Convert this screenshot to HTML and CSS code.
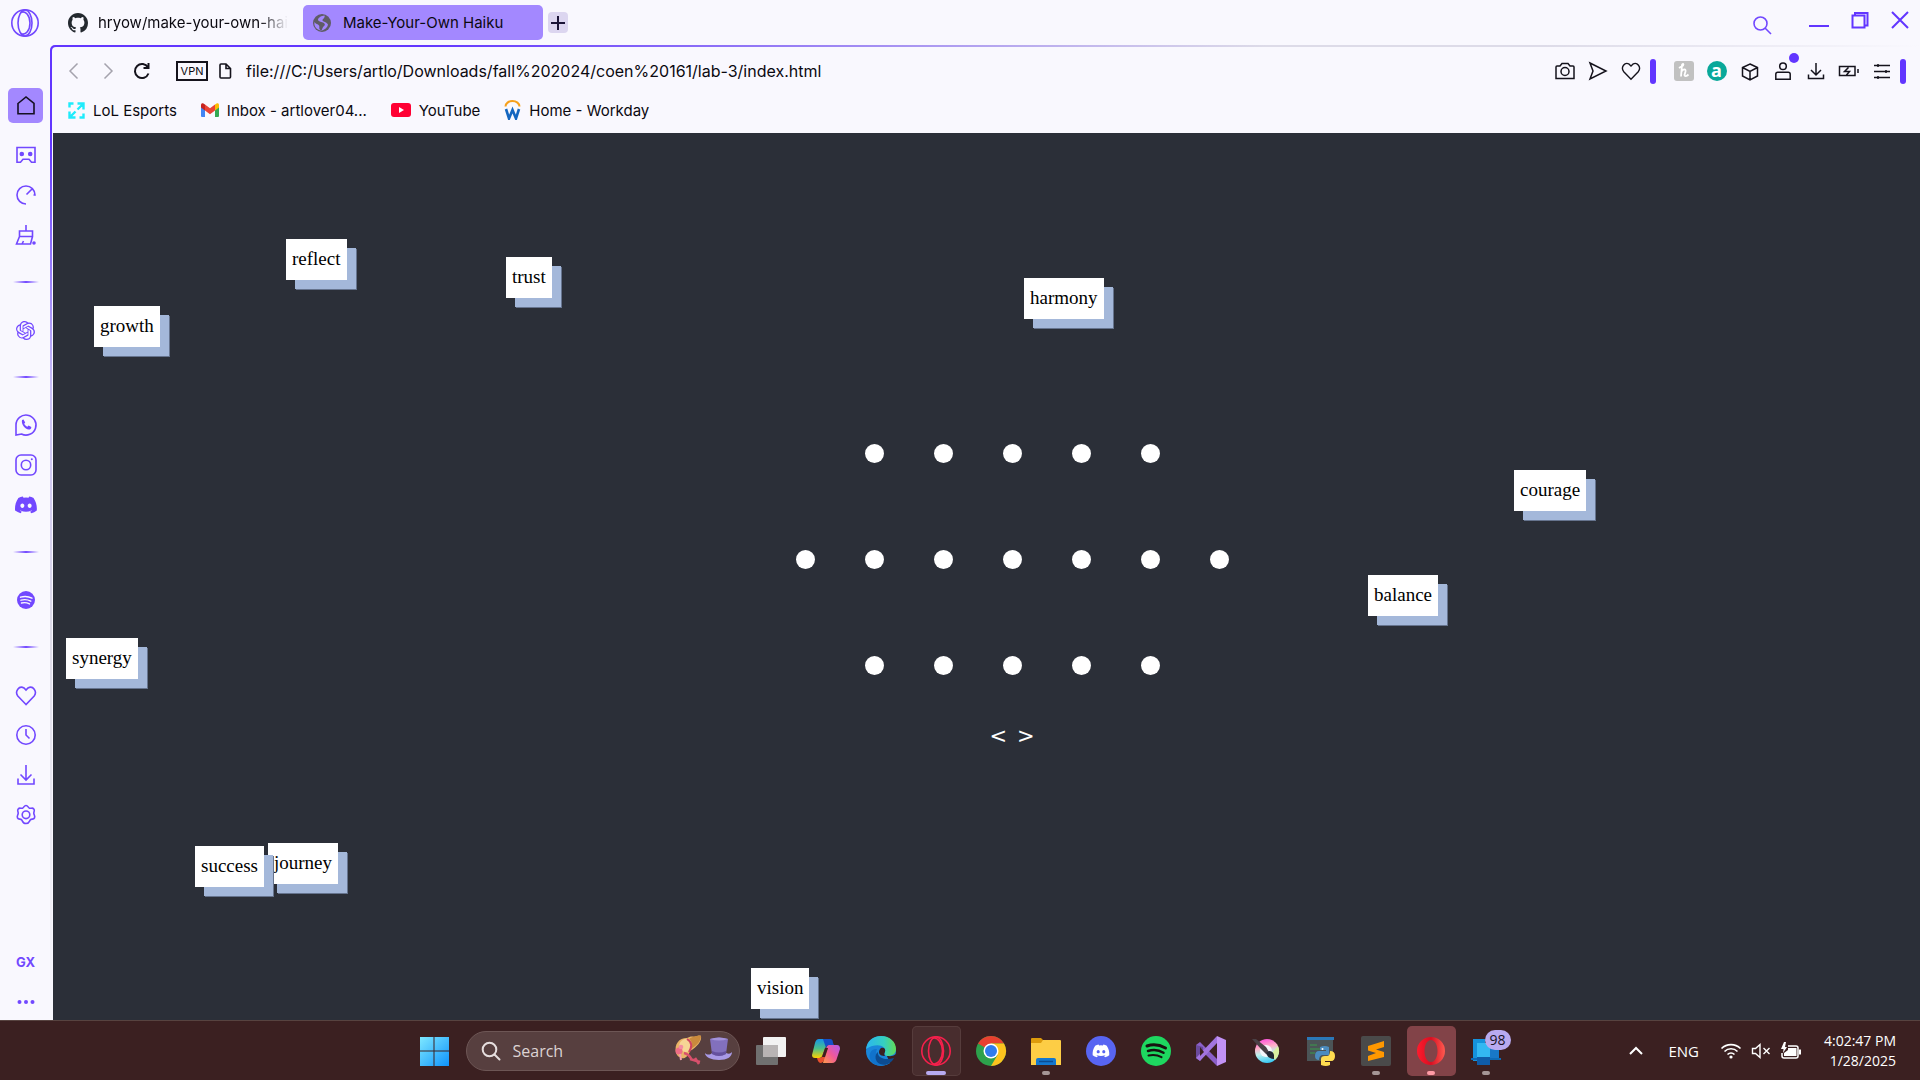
FILE: index.html
```html
<!DOCTYPE html>
<html lang="en">
<head>
<meta charset="utf-8">
<title>Make-Your-Own Haiku</title>
<link rel="stylesheet" href="styles.css">
</head>
<body>
<div class="browser">
  <header class="tabbar">
    <button class="logo" aria-label="Opera menu"><svg width="30" height="30" viewBox="0 0 30 30" class="line"><circle cx="15" cy="15" r="13.2"/><ellipse cx="15" cy="15" rx="7" ry="13"/><path d="M10.500 4.500C16 2 20 8 20 15S16 28 10.500 25.500"/></svg></button>
    <nav class="tabs" aria-label="Tabs">
      <button class="tab"><svg width="20" height="20" viewBox="0 0 16 16" fill="#24292f"><path d="M8 0C3.580 0 0 3.580 0 8c0 3.540 2.290 6.530 5.470 7.590.4.070.55-.17.55-.38 0-.19-.01-.82-.01-1.490-2.010.37-2.530-.49-2.690-.94-.09-.23-.48-.94-.82-1.130-.28-.15-.68-.52-.01-.53.63-.01 1.080.58 1.230.82.72 1.210 1.870.87 2.330.66.07-.52.28-.87.51-1.070-1.780-.2-3.640-.89-3.640-3.950 0-.87.31-1.590.82-2.150-.08-.2-.36-1.020.08-2.120 0 0 .67-.21 2.200.82.64-.18 1.320-.27 2-.27s1.360.09 2 .27c1.530-1.040 2.200-.82 2.200-.82.44 1.100.16 1.920.08 2.120.51.56.82 1.270.82 2.150 0 3.070-1.870 3.750-3.650 3.950.29.25.54.73.54 1.480 0 1.070-.01 1.930-.01 2.200 0 .21.15.46.55.38A8.010 8.010 0 0 0 16 8c0-4.420-3.580-8-8-8z"/></svg><span class="tab-title faded">hryow/make-your-own-hai</span></button>
      <button class="tab active"><svg width="20" height="20" viewBox="0 0 20 20"><circle cx="10" cy="10" r="9" fill="#5f5c66"/><path d="M12.500 2.500c-3 .2-6 2-6.500 4 0 2 3 2 5 3s2.500 2.500 1 3.500-1.500 3-2.500 4.500C6 16.500 8 14 7 12.500S3.500 11 2.500 9c-.5 3 .5 6 4 7.800l3 1c3-1 6-3 6.500-6C15 9 11.500 9 10.500 7.500 10 6 13.500 5 12.500 2.500z" fill="#a286ff"/></svg><span class="tab-title">Make-Your-Own Haiku</span></button>
      <button class="newtab" aria-label="New tab"><svg width="20" height="20" viewBox="0 0 20 20" fill="none" stroke="#1b1437" stroke-width="2"><path d="M10 3v14M3 10h14"/></svg></button>
    </nav>
    <div class="window-controls">
      <button class="search-tabs" aria-label="Search tabs"><svg width="20" height="20" viewBox="0 0 20 20" class="line"><circle cx="8.500" cy="8.500" r="6.500"/><path d="M13 13l6 6"/></svg></button>
      <button aria-label="Minimize"><svg width="22" height="20" viewBox="0 0 22 20" class="line thick"><path d="M1 16h20"/></svg></button>
      <button aria-label="Restore"><svg width="20" height="20" viewBox="0 0 20 20" class="line thick"><path d="M2.500 5.500h12v12h-12zM5 5V3h12.500v12.500H15"/></svg></button>
      <button aria-label="Close"><svg width="20" height="20" viewBox="0 0 20 20" class="line thick"><path d="M2 2l16 16M18 2L2 18"/></svg></button>
    </div>
  </header>
  <div class="workspace">
    <aside class="sidebar">
      <button class="side home" aria-label="Home"><svg width="22" height="22" viewBox="0 0 22 22" fill="none" stroke="#151022" stroke-width="1.600"><path d="M3 8.500L11 2l8 6.500v10.300H3z"/></svg></button>
      <button class="side" aria-label="Gaming"><svg width="22" height="22" viewBox="0 0 22 22" class="line"><path d="M2 3.500h18v14.700h-3.500l-2.500-3H8l-2.500 3H2z"/><circle cx="6.800" cy="10" r="1.500" fill="#7248ff"/><circle cx="15.200" cy="10" r="1.500" fill="#7248ff"/></svg></button>
      <button class="side" aria-label="GX Control"><svg width="22" height="22" viewBox="0 0 22 22" class="line"><path d="M11 20a9 9 0 1 1 9-9h-1.500M11.500 10.500L17 5"/></svg></button>
      <button class="side" aria-label="Cleaner"><svg width="22" height="22" viewBox="0 0 22 22" class="line"><path d="M11 1v6M4.500 7h13v5.500h-13zM4.500 12.500L1.500 20h14l2-7.500M7 20l1.500-3"/><circle cx="19" cy="19" r="1" fill="#7248ff"/></svg></button>
      <hr>
      <button class="side" aria-label="ChatGPT"><svg width="19" height="19" viewBox="0 0 24 24" fill="#7248ff"><path d="M22.2819 9.8211a5.9847 5.9847 0 0 0-.5157-4.9108 6.0462 6.0462 0 0 0-6.5098-2.9A6.0651 6.0651 0 0 0 4.9807 4.1818a5.9847 5.9847 0 0 0-3.9977 2.9 6.0462 6.0462 0 0 0 .7427 7.0966 5.98 5.98 0 0 0 .511 4.9107 6.051 6.051 0 0 0 6.5146 2.9001A5.9847 5.9847 0 0 0 13.2599 24a6.0557 6.0557 0 0 0 5.7718-4.2058 5.9894 5.9894 0 0 0 3.9977-2.9001 6.0557 6.0557 0 0 0-.7475-7.0729zm-9.022 12.6081a4.4755 4.4755 0 0 1-2.8764-1.0408l.1419-.0804 4.7783-2.7582a.7948.7948 0 0 0 .3927-.6813v-6.7369l2.02 1.1686a.071.071 0 0 1 .038.052v5.5826a4.504 4.504 0 0 1-4.4945 4.4944zm-9.6607-4.1254a4.4708 4.4708 0 0 1-.5346-3.0137l.142.0852 4.783 2.7582a.7712.7712 0 0 0 .7806 0l5.8428-3.3685v2.3324a.0804.0804 0 0 1-.0332.0615L9.74 19.9502a4.4992 4.4992 0 0 1-6.1408-1.6464zM2.3408 7.8956a4.485 4.485 0 0 1 2.3655-1.9728V11.6a.7664.7664 0 0 0 .3879.6765l5.8144 3.3543-2.0201 1.1685a.0757.0757 0 0 1-.071 0l-4.8303-2.7865A4.504 4.504 0 0 1 2.3408 7.872zm16.5963 3.8558L13.1038 8.364 15.1192 7.2a.0757.0757 0 0 1 .071 0l4.8303 2.7913a4.4944 4.4944 0 0 1-.6765 8.1042v-5.6772a.79.79 0 0 0-.407-.667zm2.0107-3.0231l-.142-.0852-4.7735-2.7818a.7759.7759 0 0 0-.7854 0L9.409 9.2297V6.8974a.0662.0662 0 0 1 .0284-.0615l4.8303-2.7866a4.4992 4.4992 0 0 1 6.6802 4.66zM8.3065 12.863l-2.02-1.1638a.0804.0804 0 0 1-.038-.0567V6.0742a4.4992 4.4992 0 0 1 7.3757-3.4537l-.142.0805L8.704 5.459a.7948.7948 0 0 0-.3927.6813zm1.0976-2.3654l2.602-1.4998 2.6069 1.4998v2.9994l-2.5974 1.4997-2.6067-1.4997Z"/></svg></button>
      <hr>
      <button class="side" aria-label="WhatsApp"><svg width="24" height="24" viewBox="0 0 24 24" class="line"><path d="M2 22V12a10 10 0 1 1 5.500 9z"/><path d="M8 7l1.500-.5 1.700 3-1 1.300c.7 1.400 1.700 2.400 3.200 3l1.200-1.300 2.700 1.500c.2 2-1.300 2.500-2.500 2.500C11 16 7 11.500 8 7z" fill="#7248ff" stroke="none"/></svg></button>
      <button class="side" aria-label="Instagram"><svg width="24" height="24" viewBox="0 0 24 24" class="line"><rect x="2" y="2" width="20" height="20" rx="5"/><circle cx="12" cy="12" r="4.700"/><circle cx="17.800" cy="6.300" r="1" fill="#7248ff" stroke="none"/></svg></button>
      <button class="side" aria-label="Discord"><svg width="22" height="22" viewBox="0 0 24 24" fill="#7248ff"><path id="discord" d="M20.317 4.370a19.800 19.800 0 0 0-4.885-1.515c-.3.500-.5.900-.7 1.300a18.300 18.300 0 0 0-5.480 0 12 12 0 0 0-.7-1.300A19.700 19.700 0 0 0 3.677 4.370C.533 9.046-.32 13.580.1 18.058a19.900 19.900 0 0 0 6 3.030c.5-.6.900-1.300 1.300-2a13 13 0 0 1-1.900-.9l.4-.3a14.200 14.200 0 0 0 12.100 0l.4.300c-.6.400-1.200.650-1.900.9.400.7.800 1.400 1.250 2a19.800 19.800 0 0 0 6-3.030c.5-5.180-.84-9.670-3.550-13.690zM8.020 15.330c-1.180 0-2.160-1.080-2.160-2.420s.96-2.420 2.160-2.420 2.180 1.100 2.160 2.420c0 1.340-.96 2.420-2.160 2.420zm7.970 0c-1.180 0-2.150-1.080-2.150-2.420s.95-2.420 2.150-2.420 2.180 1.100 2.160 2.420c0 1.340-.94 2.420-2.160 2.420z"/></svg></button>
      <hr>
      <button class="side" aria-label="Spotify"><svg width="20" height="20" viewBox="0 0 20 20" fill="none" stroke="#f9f8fe" stroke-width="1.400" stroke-linecap="round"><circle cx="10" cy="10" r="9" fill="#7248ff" stroke="none"/><path d="M4.500 7.200c4-1.200 8-.8 11.500 1M5 10.200c3.500-1 6.800-.6 9.800 1M5.500 13c3-.7 5.500-.4 8 .9"/></svg></button>
      <hr>
      <button class="side" aria-label="Bookmarks"><svg width="22" height="22" viewBox="0 0 22 22" class="line"><path d="M11 20.500L2.800 12C-.5 7.500 4 1 9 4l2 2 2-2c5-3 9.500 3.500 6.200 8z"/></svg></button>
      <button class="side" aria-label="History"><svg width="22" height="22" viewBox="0 0 22 22" class="line"><circle cx="11" cy="11" r="9.200"/><path d="M11 5v6l3.500 3.500"/></svg></button>
      <button class="side" aria-label="Downloads"><svg width="22" height="22" viewBox="0 0 22 22" class="line"><path d="M11 1v15M5.500 10.500L11 16l5.500-5.500M3 14.500v5.500h16v-5.500"/></svg></button>
      <button class="side" aria-label="Settings"><svg width="22" height="22" viewBox="0 0 22 22" class="line"><path d="M11 1.500c2 0 2 2.200 3.500 2.700s3-.9 4.300.7 0 2.600 0 4.300 1.600 2.600.7 4.600-2.700.8-4 1.900-.8 3.800-4.500 3.800-3.200-2.700-4.500-3.800-3.100.1-4-1.900.7-2.900.7-4.600-1.300-2.700 0-4.300 2.800-.2 4.300-.7S9 1.500 11 1.500z"/><circle cx="11" cy="10.800" r="3.800"/></svg></button>
      <div class="side-bottom">
        <button class="side gx">GX</button>
        <button class="side" aria-label="More"><svg width="22" height="10" viewBox="0 0 22 10" fill="#7248ff"><circle cx="4.500" cy="5" r="2"/><circle cx="11" cy="5" r="2"/><circle cx="17.500" cy="5" r="2"/></svg></button>
      </div>
    </aside>
    <div class="frame">
      <div class="pane">
        <div class="toolbar">
          <button class="tool dim" aria-label="Back"><svg width="20" height="20" viewBox="0 0 20 20"><path d="M13.500 2.500L6 10l7.500 7.500"/></svg></button>
          <button class="tool dim" aria-label="Forward"><svg width="20" height="20" viewBox="0 0 20 20"><path d="M6.500 2.500L14 10l-7.500 7.500"/></svg></button>
          <button class="tool" aria-label="Reload"><svg width="20" height="20" viewBox="0 0 20 20" class="bold"><path d="M16.500 12.500A7 7 0 1 1 16 6.500M16.500 2v5h-5"/></svg></button>
          <button class="vpn">VPN</button>
          <svg class="file" width="14" height="18" viewBox="0 0 14 18" fill="none" stroke="#15131c" stroke-width="1.600"><path d="M3 2h5l4.500 4.500V15q0 1-1 1H3q-1 0-1-1V3q0-1 1-1zM8 2v4.500h4.500"/></svg>
          <input class="address" type="text" aria-label="Address" value="file:///C:/Users/artlo/Downloads/fall%202024/coen%20161/lab-3/index.html">
          <div class="tools">
            <button class="tool" aria-label="Snapshot"><svg width="22" height="20" viewBox="0 0 22 20"><path d="M2 17.500V6q0-1 1-1h3l2-2.500h6L16 5h3q1 0 1 1v11.500z"/><circle cx="11" cy="10.500" r="4"/></svg></button>
            <button class="tool" aria-label="My Flow"><svg width="20" height="20" viewBox="0 0 20 20"><path d="M2 2l16 8-16 8 3-8z"/></svg></button>
            <button class="tool" aria-label="Add to bookmarks"><svg width="20" height="20" viewBox="0 0 22 22"><path d="M11 20L2.800 11.500C-.5 7 4 .5 9 3.500l2 2 2-2c5-3 9.500 3.500 6.200 8z"/></svg></button>
            <i class="grip"></i>
            <button class="tool" aria-label="Honey"><svg width="20" height="20" viewBox="0 0 20 20"><rect width="20" height="20" rx="3" fill="#c1c1c1" stroke="none"/><path stroke="#fff" stroke-width="1.800" d="M5 7l4-2.500c1-1.500 0-2.500-1-.5L7 15.500M7.500 10.500c2-3 4.500-2.500 4 0l-1 3.500c0 1.500 2 1.500 4-.5"/></svg></button>
            <button class="tool amazon" aria-label="Amazon Assistant"><span>a</span></button>
            <button class="tool" aria-label="Extensions"><svg width="20" height="20" viewBox="0 0 20 20"><path d="M10 3l7.500 3.500v8.500L10 19l-7.500-4V6.500zM2.500 6.500L10 10.500l7.500-4M10 10.500V19"/></svg></button>
            <button class="tool profile" aria-label="Profile"><svg width="20" height="20" viewBox="0 0 20 20"><circle cx="10" cy="5.200" r="3.300"/><path d="M2.800 18.200v-5q0-2 2-2h10.400q2 0 2 2v5z"/></svg><i class="notice"></i></button>
            <button class="tool" aria-label="Downloads"><svg width="20" height="20" viewBox="0 0 20 20"><path d="M10 2v11.500M5 9l5 5 5-5M2.500 13.500v4h15v-4"/></svg></button>
            <button class="tool" aria-label="Battery saver"><svg width="22" height="20" viewBox="0 0 22 20"><path d="M1.500 5.500h15.500v9H1.500zM20 8v4M10.500 6.500l-4 4h5l-3 3.500"/></svg></button>
            <button class="tool" aria-label="Easy setup"><svg width="20" height="20" viewBox="0 0 20 20"><path d="M2 4.500h16M2 10.500h16M2 16.500h16M6 3v3M14 9v3M6 15v3"/></svg></button>
            <i class="grip"></i>
          </div>
        </div>
        <nav class="bookmarks" aria-label="Bookmarks bar">
          <a href="#"><svg width="17" height="17" viewBox="0 0 17 17" fill="none" stroke="#1febfb" stroke-width="2.400"><path d="M1.500 5.500v-4h4M9.500 1.500h6v6M15.500 11.500v4h-4M7.500 15.500h-6v-6M15 2L9.500 7.500M2 15l5.500-5.500"/></svg>LoL Esports</a>
          <a href="#"><svg width="18" height="14" viewBox="0 0 18 14"><path d="M0 2v11q0 1 1 1h3V5z" fill="#4285f4"/><path d="M18 2v11q0 1-1 1h-3V5z" fill="#34a853"/><path d="M14 1.500L16 .3q2-.6 2 1.700v2.500l-4 3z" fill="#fbbc04"/><path d="M4 1.500L9 5.300l5-3.800v6L9 11.200 4 7.500z" fill="#ea4335"/><path d="M4 1.500L2 .3Q0-.3 0 2v2.500l4 3z" fill="#c5221f"/></svg>Inbox - artlover04...</a>
          <a href="#"><svg width="20" height="14" viewBox="0 0 20 14"><rect width="20" height="14" rx="3" fill="#f03"/><path d="M8 4l5 3-5 3z" fill="#fff"/></svg>YouTube</a>
          <a href="#"><svg width="17" height="20" viewBox="0 0 17 20" fill="none"><path d="M1.500 6.500a7 5.500 0 0 1 14 0" stroke="#f6a01c" stroke-width="2"/><path d="M2 9l3 9.500L8.500 10l3.500 8.500L15 9" stroke="#1466c0" stroke-width="2.600"/></svg>Home - Workday</a>
        </nav>
        <main class="page">
          <div class="haiku">
            <div class="row"><i></i><i></i><i></i><i></i><i></i></div>
            <div class="row"><i></i><i></i><i></i><i></i><i></i><i></i><i></i></div>
            <div class="row"><i></i><i></i><i></i><i></i><i></i></div>
            <div class="arrows"><button>&lt;</button><button>&gt;</button></div>
          </div>
          <div class="word reflect">reflect</div>
          <div class="word trust">trust</div>
          <div class="word growth">growth</div>
          <div class="word harmony">harmony</div>
          <div class="word courage">courage</div>
          <div class="word balance">balance</div>
          <div class="word synergy">synergy</div>
          <div class="word journey">journey</div>
          <div class="word success">success</div>
          <div class="word vision">vision</div>
        </main>
      </div>
    </div>
  </div>
</div>
<footer class="taskbar">
  <div class="apps">
    <button class="app" aria-label="Start"><svg width="30" height="30" viewBox="0 0 30 30"><defs><linearGradient id="win" x1="0" y1="0" x2="1" y2="1" gradientUnits="objectBoundingBox"><stop offset="0" stop-color="#7ee8ff"/><stop offset="1" stop-color="#0f93fb"/></linearGradient></defs><path fill="url(#win)" d="M1 1h13.500v13.500H1zM15.500 1H30v13.500H15.500zM1 15.500h13.500V30H1zM15.500 15.500H30V30H15.500z"/></svg></button>
    <label class="search"><svg width="20" height="20" viewBox="0 0 20 20" fill="none" stroke="#e6dede" stroke-width="2"><circle cx="8.500" cy="8.500" r="6.800"/><path d="M13.500 13.500l5 5" stroke-linecap="round"/></svg><input type="text" placeholder="Search" aria-label="Search">
      <svg width="60" height="32" viewBox="0 0 60 32"><path d="M2 18C0 9 5 3 13 3c2-1 5-2 7-1 3-1 6-2 7-1 1 5-4 11-11 15-2 7-8 9-10 6-2 0-3-2-4-4z" fill="#e9b467"/><path d="M5 12c0-5 4-9 9-8 4 2 4 9 1 12-3 2-8 1-10-4z" fill="#f6d595"/><path d="M15 4c3-3 10-4 12-3 0 5-4 9-10 13 2-4 1-8-2-10z" fill="#c98a3d"/><path d="M13 4c5 3 5 8 2 13" fill="none" stroke="#cf4560" stroke-width="2"/><path d="M10 18q5 1 8 7M16 24l10 3M21 23l4 6" fill="none" stroke="#d8506c" stroke-width="2.500"/><circle cx="5" cy="16" r="3.500" fill="#ef6d86"/><circle cx="7" cy="12" r="2.300" fill="#f48ca0"/><path d="M6 19l1 6" stroke="#f5a0ae" stroke-width="2"/><path d="M31 18c2 2 5 2 7 0h14c3 1 4 1 6-1 0 5-5 8-13 8s-14-3-14-7z" fill="#a99ae6"/><path d="M36 4q9-3 18 0l-2 15q-7 4-14 0z" fill="#8270bd"/><path d="M36 4q9-3 18 0-9 3-18 0z" fill="#a392da"/><path d="M38 16q7 3 14 0v3q-7 4-14 0z" fill="#65519e"/></svg>
    </label>
    <button class="app" aria-label="Task view"><svg width="32" height="32" viewBox="0 0 32 32"><rect x="1" y="10" width="22" height="20" rx="1" fill="#707070"/><rect x="8" y="2" width="23" height="20" rx="1" fill="#f2f2f2"/><path d="M8 10h15v12H8z" fill="#b8b4b4"/></svg></button>
    <button class="app" aria-label="Copilot"><svg width="30" height="28" viewBox="0 0 30 28"><defs><linearGradient id="cpa" x1="0" y1="0" x2="0" y2="1"><stop offset="0" stop-color="#1594e8"/><stop offset=".5" stop-color="#4bc08a"/><stop offset="1" stop-color="#ffd000"/></linearGradient><linearGradient id="cpb" x1="1" y1="0" x2="0" y2="1"><stop offset="0" stop-color="#b05cf0"/><stop offset=".5" stop-color="#f0589a"/><stop offset="1" stop-color="#ff9a4a"/></linearGradient></defs><path d="M8 2h10l-6 15q-1 4-4 4H4q-3 0-3-3L4 6q1-4 4-4z" fill="url(#cpa)"/><path d="M12 2h7q3 0 3 4l1 2h-4q-3 0-4 3z" fill="#1450c8"/><path d="M18 8h8q3 0 3 4l-3 9q-1 5-5 5h-9l3-14q1-4 3-4z" fill="url(#cpb)"/><path d="M6 21h3q2 0 3-4l2-6h3l-4 12q-1 3-3 3-3 0-4-5z" fill="#e8502e"/><path d="M14 11l-3 9h3l3-9z" fill="#3b2021"/></svg></button>
    <button class="app" aria-label="Edge"><svg width="32" height="32" viewBox="0 0 32 32"><defs><linearGradient id="ed1"><stop offset="0" stop-color="#2bb5f0"/><stop offset=".6" stop-color="#35cfc0"/><stop offset="1" stop-color="#62dc56"/></linearGradient></defs><circle cx="16" cy="16" r="15" fill="#1a86da"/><path d="M20 17c-1 4 6 6 11 2v13h-4z" fill="#3b2021"/><path d="M1 14C2 6 8 1 16 1c9 0 15 6 15 13 0 5-4 7-8 7-3 0-4-2-3-4 2-6-8-10-19-3z" fill="url(#ed1)"/><path d="M12 14c-3 6 2 15 12 14-5 4-14 4-18-2-4-7 1-13 6-12z" fill="#1173cc"/><path d="M13 17c-1 5 6 9 16 6-3 6-9 8-14 6-5-2-6-9-2-12z" fill="#0c4c92"/><path d="M16 13c3-1 5 1 4 4-1 1-1 3 0 4-3 0-6-1-6-4 0-2 1-3 2-4z" fill="#3b2021"/></svg></button>
    <button class="app open" aria-label="Opera GX"><svg width="32" height="32" viewBox="0 0 32 32" fill="none" stroke="#f5204c" stroke-width="1.600"><circle cx="16" cy="16" r="14.200"/><ellipse cx="16" cy="16" rx="7.500" ry="14"/><path d="M12 3.500C18 1 22.500 9 22.500 16S18 31 12 28.500"/></svg></button>
    <button class="app" aria-label="Chrome"><svg width="32" height="32" viewBox="0 0 32 32"><circle cx="16" cy="16" r="15" fill="#2da14c"/><path d="M16 16L3 8.500A15 15 0 0 1 29 8.500H16z" fill="#e8402f"/><path d="M16 8.500h13A15 15 0 0 1 16 31l6.500-11z" fill="#fcc31e"/><circle cx="16" cy="16" r="7.500" fill="#fff"/><circle cx="16" cy="16" r="6" fill="#2f7cec"/></svg></button>
    <button class="app running" aria-label="File Explorer"><svg width="32" height="32" viewBox="0 0 32 32"><path d="M1 4q0-1 1-1h9l3 3v5H1z" fill="#dd9b0c"/><path d="M1 8h10l2-3h17q1 0 1 1v24H1z" fill="#fdcd45"/><path d="M6 30v-5q0-2 2-2h16q2 0 2 2v5z" fill="#1377cf"/><path d="M9 26.500h14" stroke="#0b4c92" stroke-width="1.500"/></svg></button>
    <button class="app" aria-label="Discord"><svg width="32" height="32" viewBox="0 0 32 32"><circle cx="16" cy="16" r="15" fill="#5865f2"/><use href="#discord" fill="#fff" transform="translate(7.600 7.600) scale(.7)"/></svg></button>
    <button class="app" aria-label="Spotify"><svg width="32" height="32" viewBox="0 0 32 32" fill="none" stroke="#17120f" stroke-linecap="round"><circle cx="16" cy="16" r="15" fill="#1ed760" stroke="none"/><path d="M7 11c6-2 13-1 18.500 2" stroke-width="3"/><path d="M8 16c5-1.500 11-1 15.500 1.800" stroke-width="2.500"/><path d="M8.500 20.500c4.500-1 9-.6 13 1.700" stroke-width="2"/></svg></button>
    <button class="app" aria-label="Visual Studio"><svg width="32" height="32" viewBox="0 0 32 32"><path d="M1 10l4-3 17 17v7z" fill="#8a5fc7"/><path d="M1 10v13l4 3 3-4V12z" fill="#6a4a9c"/><path d="M1 23l4 3L22 8V1z" fill="#a274de"/><path d="M22 1l9 4v22l-9 4z" fill="#c292f5"/><path d="M5 12v9l4-4z" fill="#3c2021"/></svg></button>
    <button class="app" aria-label="Krita"><svg width="30" height="30" viewBox="0 0 30 30"><defs><linearGradient id="kr" x1=".3" y1="0" x2=".5" y2="1"><stop offset="0" stop-color="#ff4fdc"/><stop offset=".35" stop-color="#ffb0c8"/><stop offset=".6" stop-color="#bff0ec"/><stop offset="1" stop-color="#35c8f4"/></linearGradient></defs><circle cx="16" cy="15" r="12" fill="url(#kr)"/><path d="M27 10a12 12 0 0 1-3 14l-4-6z" fill="#d8f0a0"/><circle cx="15" cy="15" r="6" fill="#f4f6fa"/><path d="M1 3l4 0 10 8 3 5-3 2-5-5z" fill="#4a4146"/><path d="M15 17l3-2q4 0 5 4v4q-6 0-8-6z" fill="#222833"/></svg></button>
    <button class="app" aria-label="Python IDLE"><svg width="32" height="32" viewBox="0 0 32 32"><path d="M2 3h26v23H2z" fill="#4b5457"/><path d="M2 2h27v3H2z" fill="#2b78b8"/><path d="M5 10h7M5 14h10M5 18h5" stroke="#3a9b4d"/><path d="M15 12q5-2 9 0v8h-7q-3 1-3 5-4 0-4-4 0-5 4-5h7v-1h-6z" fill="#4b8bbe"/><path d="M25 16q5 0 5 5t-4 5h-6v1h5v3q-4 2-9 0v-6q0-3 4-3h2q3 0 3-5z" fill="#ffdc50"/><circle cx="17.500" cy="14" r="1" fill="#fff"/></svg></button>
    <button class="app running" aria-label="Sublime Text"><svg width="32" height="32" viewBox="0 0 32 32"><rect x="1" y="1" width="30" height="30" rx="2" fill="#4a4a4a"/><path d="M8 11l16-5v6l-8 2.500 8 2.500v5L8 26v-5l8-3-8-2.500z" fill="#ff9800"/></svg></button>
    <button class="app alert" aria-label="Opera"><svg width="32" height="32" viewBox="0 0 32 32"><defs><linearGradient id="op"><stop offset="0" stop-color="#ff1b2d"/><stop offset=".5" stop-color="#d80f22"/><stop offset="1" stop-color="#ff5a50"/></linearGradient></defs><path fill="url(#op)" fill-rule="evenodd" d="M16 2a14 14 0 1 1 0 28 14 14 0 0 1 0-28zm0 3c-4 0-6.500 5-6.500 11S12 27 16 27s6.500-5 6.500-11S20 5 16 5z"/></svg></button>
    <button class="app running" aria-label="Phone Link, 98 notifications"><svg width="32" height="32" viewBox="0 0 32 32"><path d="M3 4h12v22H3z" fill="#1592dc"/><path d="M1 23h30v2H1z" fill="#0d6ab6"/><path d="M16 10h13v13H16z" fill="#1878c8"/><path d="M7 8h13v21H7z" fill="#33b8f2"/><path d="M7 22h13v8H7z" fill="#0f5ca8"/></svg><span class="badge">98</span></button>
  </div>
  <div class="tray">
    <button class="chevron" aria-label="Show hidden icons"><svg width="16" height="12" viewBox="0 0 16 12" fill="none" stroke="#fff" stroke-width="2"><path d="M2 9l6-6 6 6"/></svg></button>
    <span class="lang">ENG</span>
    <div class="status">
      <svg width="22" height="18" viewBox="0 0 22 18" fill="none" stroke="#fff" stroke-width="1.600"><path d="M1.500 6.500a13.500 13.500 0 0 1 19 0M4.500 9.500a9.200 9.200 0 0 1 13 0M7.500 12.500a5 5 0 0 1 7 0"/><circle cx="11" cy="15" r="1.600" fill="#fff" stroke="none"/></svg>
      <svg width="20" height="18" viewBox="0 0 20 18" fill="none" stroke="#fff" stroke-width="1.400"><path d="M1.500 6.500h3L9 2.500v13l-4.500-4h-3zM12.500 6l6 6M18.500 6l-6 6"/></svg>
      <svg width="22" height="18" viewBox="0 0 22 18"><path d="M8 4h8q2 0 2 2v8q0 2-2 2H4q-2 0-2-2v-3" fill="none" stroke="#fff" stroke-width="1.500"/><path d="M8 6h8.500v8H4v-3l4-3zM19 7.500h2v5h-2z" fill="#fff"/><path d="M4 0L1 7h2.500L3 11l4-6H5l1-5z" fill="#fff"/></svg>
    </div>
    <time class="clock"><span>4:02:47 PM</span><span>1/28/2025</span></time>
  </div>
</footer>
</body>
</html>
```
FILE: styles.css
```css
* { box-sizing: border-box; }
body {
  margin: 0;
  min-height: 100vh;
  display: flex;
  flex-direction: column;
  background: #f9f8fe;
  color: #0b0910;
  font-family: Inter, "Liberation Sans", sans-serif;
  font-size: 15px;
}
button {
  display: flex;
  align-items: center;
  justify-content: center;
  margin: 0;
  padding: 0;
  border: 0;
  background: none;
  color: inherit;
  font: inherit;
}
input { border: 0; padding: 0; background: none; color: inherit; font: inherit; outline: 0; }
svg { display: block; flex: none; }
.line { fill: none; stroke: #7248ff; stroke-width: 1.6; }
.thick { stroke: #6236ff; stroke-width: 2; }

.browser { flex: 1; display: flex; flex-direction: column; }
.tabbar { display: flex; height: 45px; }
.logo { width: 50px; }
.tabs { display: flex; align-items: center; flex: 1; padding-left: 9px; }
.tab { width: 240px; height: 35px; padding: 0 9px; gap: 11px; border-radius: 5px; justify-content: flex-start; }
.tab:first-child { margin-right: 4px; gap: 10px; }
.tab.active { background: #a388ff; }
.tab-title { white-space: nowrap; }
.faded { -webkit-mask-image: linear-gradient(90deg, #000 85%, transparent); mask-image: linear-gradient(90deg, #000 85%, transparent); }
.newtab { width: 20px; height: 21px; margin-left: 5px; border-radius: 4px; background: #dcd6f0; }
.window-controls { display: flex; align-items: center; gap: 20px; padding: 0 10px 5px 0; }
.search-tabs { margin-right: 16px; padding-top: 10px; }

.workspace { flex: 1; display: flex; }
.sidebar { width: 50px; padding: 43px 0 0 1px; display: flex; flex-direction: column; align-items: center; }
.side { width: 40px; height: 40px; }
.side.home { width: 35px; height: 35px; margin-bottom: 12px; border-radius: 5px; background: #a388ff; }
.sidebar hr {
  width: 26px;
  height: 2px;
  margin: 26px 0 27px;
  border: 0;
  background: linear-gradient(90deg, transparent, #7248ff, transparent);
}
.side-bottom { margin-top: auto; display: flex; flex-direction: column; gap: 4px; }
.side-bottom .side { height: 36px; }
.gx { color: #7248ff; font-size: 13px; font-weight: 700; }

.frame {
  flex: 1;
  min-width: 0;
  display: flex;
  padding: 2px 0 0 2px;
  border-top-left-radius: 5px;
  background:
    linear-gradient(90deg, #6236ff 0, #6236ff 20%, #dddbe8 65%, #dddbe8 80%, #f9f8fe) 0 0 / 100% 5px no-repeat,
    linear-gradient(#6236ff 0, #6236ff 10%, #c9bff5 35%, #dddbe8 60%, #f9f8fe) 0 0 / 5px 100% no-repeat;
}
.pane {
  flex: 1;
  min-width: 0;
  display: flex;
  flex-direction: column;
  padding-left: 1px;
  border-top-left-radius: 4px;
  background: #f9f8fe;
}
.toolbar { display: flex; align-items: center; height: 48px; padding-left: 4px; }
.tool { width: 34px; height: 32px; }
.tools { display: flex; align-items: center; padding-right: 14px; }
.tools .tool { width: 33px; }
.tool svg { fill: none; stroke: #15131c; stroke-width: 1.5; }
.tool svg.bold { stroke-width: 2; }
.dim svg { stroke: #a5a3ad; }
.vpn { width: 32px; height: 20px; margin: 0 10px 0 17px; border: 2px solid #15131c; font-size: 11px; }
.address { flex: 1; min-width: 0; margin-left: 14px; font-size: 16px; }
.grip { width: 6px; height: 25px; margin: 0 11px 0 3px; border-radius: 3px; background: #6236ff; }
.grip:last-child { margin: 0 0 0 2px; }
.amazon span { width: 20px; height: 20px; border-radius: 10px; background: #0aa89a; color: #fff; font: bold 18px/18px "Open Sans", sans-serif; }
.profile { position: relative; }
.notice { position: absolute; top: -2px; right: 0; width: 10px; height: 10px; border-radius: 5px; background: #6236ff; }
.bookmarks { display: flex; align-items: center; gap: 24px; height: 38px; padding: 0 0 8px 15px; }
.bookmarks a { display: flex; align-items: center; gap: 8px; color: inherit; text-decoration: none; }

.page { flex: 1; position: relative; overflow: hidden; padding: 267px 0 0 51px; background: #2b2f38; }
.haiku { display: flex; flex-direction: column; align-items: center; }
.row { display: flex; align-items: center; gap: 50px; height: 106px; }
.row i { width: 19px; height: 19px; border-radius: 50%; background: #fff; }
.arrows { display: flex; gap: 10px; height: 36px; color: #fff; font: 21px "DejaVu Sans", sans-serif; }
.word {
  position: absolute;
  padding: 9px 6px 11px;
  background: #fff;
  color: #000;
  font: 19px/21px "Liberation Serif", serif;
  box-shadow: 9px 9px #a4b8da, 10px 10px #66748e;
}
.reflect { left: 233px; top: 106px; }
.trust { left: 453px; top: 124px; }
.growth { left: 41px; top: 173px; }
.harmony { left: 971px; top: 145px; }
.courage { left: 1461px; top: 337px; }
.balance { left: 1315px; top: 442px; }
.synergy { left: 13px; top: 505px; }
.journey { left: 215px; top: 710px; }
.success { left: 142px; top: 713px; }
.vision { left: 698px; top: 835px; }

.taskbar {
  display: grid;
  grid-template-columns: 1fr auto 1fr;
  height: 60px;
  border-top: 1px solid #574340;
  background: #3b2021;
  color: #fff;
  font-family: "Open Sans", "Noto Sans", sans-serif;
}
.apps { grid-column: 2; display: flex; align-items: center; }
.app { position: relative; width: 55px; height: 50px; }
.search {
  display: flex;
  align-items: center;
  gap: 12px;
  width: 274px;
  height: 40px;
  margin: 0 4px;
  padding: 0 5px 0 14px;
  border: 1px solid #6d5655;
  border-radius: 20px;
  background: #573f3f;
}
.search input { flex: 1; min-width: 0; font-size: 16px; }
.search input::placeholder { color: #ddd3d3; opacity: 1; }
.app.running::after, .app.alert::after, .app.open::after {
  content: "";
  position: absolute;
  bottom: 1px;
  left: 50%;
  width: 8px;
  height: 4px;
  margin-left: -4px;
  border-radius: 2px;
  background: #a59696;
}
.app.open::after { width: 20px; margin-left: -10px; background: #b8aaf0; }
.app.alert::after { background: #ff9ba6; }
.app.open, .app.alert { width: 49px; margin: 0 3px; border-radius: 5px; background: #482d2e; box-shadow: inset 0 0 0 1px #563c3c; }
.app.alert { background: #824348; box-shadow: none; }
.badge {
  position: absolute;
  top: 4px;
  right: 3px;
  width: 26px;
  height: 20px;
  border-radius: 10px;
  background: #b8aaf0;
  color: #17121f;
  font-size: 14px;
  line-height: 20px;
}
.tray { grid-column: 3; display: flex; align-items: center; justify-content: flex-end; padding-right: 24px; }
.lang { margin: 0 21px 0 24px; font-size: 15px; }
.status { display: flex; gap: 9px; margin-right: 22px; }
.clock { display: flex; flex-direction: column; align-items: flex-end; font-size: 14px; line-height: 20px; }
```
